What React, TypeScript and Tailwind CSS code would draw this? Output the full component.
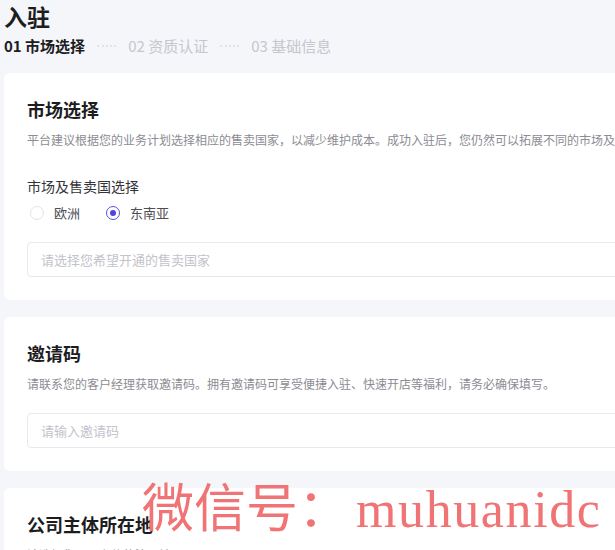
const steps = [
  { no: '01', label: '市场选择', active: true },
  { no: '02', label: '资质认证', active: false },
  { no: '03', label: '基础信息', active: false },
];

function Radio({ label, checked }: { label: string; checked?: boolean }) {
  return (
    <label className="flex items-center gap-[10px] text-[13px] text-[#4e4e55]">
      <span
        className={`w-[14px] h-[14px] rounded-full border flex items-center justify-center bg-white ${
          checked ? 'border-[#5b50e0]' : 'border-[#e3e3e8]'
        }`}
      >
        {checked && <span className="w-[6px] h-[6px] rounded-full bg-[#4f44dc]"></span>}
      </span>
      {label}
    </label>
  );
}

function Card({ title, desc, children }: { title: string; desc: string; children?: React.ReactNode }) {
  return (
    <div className="bg-white rounded-[6px] px-[23px] pt-[23px] pb-[23px]">
      <h2 className="text-[18px] leading-[26px] font-bold text-[#1d1d1f]">{title}</h2>
      <p className="mt-[8px] text-[12px] leading-[20px] text-[#8c8c93] whitespace-nowrap">{desc}</p>
      {children}
    </div>
  );
}

export default function App() {
  return (
    <div
      className="relative min-h-screen h-[550px] overflow-hidden bg-[#f5f6f9]"
      style={{ fontFamily: '"Noto Sans CJK SC", "Noto Sans", sans-serif' }}
    >
      <div className="w-[860px] pl-[4px]">
        <h1 className="text-[23px] leading-[32px] font-bold text-[#1d1d1f]">入驻</h1>
        <div className="mt-[4px] flex items-center gap-[12px] text-[15px] leading-[20px]">
          {steps.map((s, i) => (
            <div key={s.no} className="flex items-center gap-[12px]">
              {i > 0 && <span className="w-[19px] border-t-2 border-dotted border-[#e2e2e8]"></span>}
              <span className={s.active ? 'font-semibold text-[#1d1d1f]' : 'text-[#c6c6ce]'}>
                {s.no} {s.label}
              </span>
            </div>
          ))}
        </div>

        <div className="mt-[17px] flex flex-col gap-[17px]">
          <Card
            title="市场选择"
            desc="平台建议根据您的业务计划选择相应的售卖国家，以减少维护成本。成功入驻后，您仍然可以拓展不同的市场及售卖国家。"
          >
            <div className="mt-[26px] text-[14px] leading-[20px] text-[#33333a]">市场及售卖国选择</div>
            <div className="mt-[7px] h-[20px] flex items-center gap-[26px] pl-[3px]">
              <Radio label="欧洲" />
              <Radio label="东南亚" checked />
            </div>
            <div className="mt-[19px] h-[35px] border border-[#e8e8ee] rounded-[4px] flex items-center px-[13px] text-[13px] text-[#c3c3cb]">
              请选择您希望开通的售卖国家
            </div>
          </Card>

          <Card
            title="邀请码"
            desc="请联系您的客户经理获取邀请码。拥有邀请码可享受便捷入驻、快速开店等福利，请务必确保填写。"
          >
            <div className="mt-[19px] h-[35px] border border-[#e8e8ee] rounded-[4px] flex items-center px-[13px] text-[13px] text-[#c3c3cb]">
              请输入邀请码
            </div>
          </Card>

          <Card title="公司主体所在地" desc="请选择您公司主体的注册地区" />
        </div>
      </div>

      <div
        className="absolute left-[142px] top-[478px] text-[52px] leading-[64px] text-[#f07376] pointer-events-none whitespace-nowrap"
        style={{ fontFamily: '"Liberation Serif", "Noto Sans CJK SC", serif' }}
      >
        微信号：<span className="ml-[6px] tracking-[1.6px]">muhuanidc</span>
      </div>
    </div>
  );
}
